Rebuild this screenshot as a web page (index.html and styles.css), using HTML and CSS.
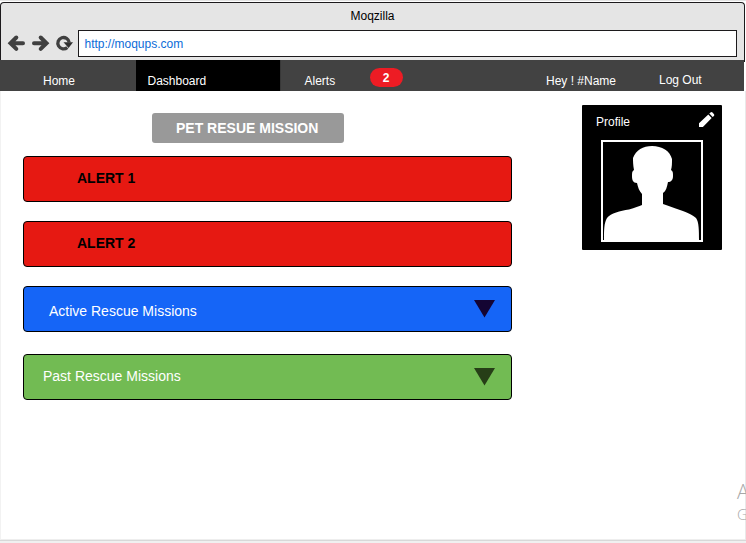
FILE: index.html
```html
<!DOCTYPE html>
<html lang="en">
<head>
<meta charset="utf-8">
<title>Moqzilla</title>
<link rel="stylesheet" href="styles.css">
</head>
<body>
<div class="window">
  <header class="chrome">
    <div class="title">Moqzilla</div>
    <div class="toolbar">
      <svg class="controls" width="70" height="19" viewBox="0 0 70 19" fill="none" stroke="#404040" stroke-width="4">
        <path d="M17 9.200H5M10.300 3.500L4.500 9.200L10.300 14.900" stroke-linecap="round"/>
        <path d="M28 9.200H40M34.700 3.500L40.500 9.200L34.700 14.900" stroke-linecap="round"/>
        <path d="M61.300 13.500A5.700 5.700 0 1 1 63.200 8.500" stroke-width="3.300"/>
        <path d="M57.500 8.300H67L62.600 14Z" fill="#303030" stroke="none"/>
      </svg>
      <div class="address">http://moqups.com</div>
    </div>
  </header>
  <nav class="nav">
    <a class="tab home">Home</a>
    <a class="tab dashboard">Dashboard</a>
    <a class="tab alerts">Alerts</a>
    <span class="badge">2</span>
    <span class="tab user">Hey ! #Name</span>
    <a class="tab logout">Log Out</a>
  </nav>
  <main class="page">
    <section class="missions">
      <h1 class="heading">PET RESUE MISSION</h1>
      <div class="card alert">ALERT 1</div>
      <div class="card alert">ALERT 2</div>
      <div class="card active"><span>Active Rescue Missions</span>
        <svg width="21" height="18" viewBox="0 0 21 18"><path d="M0 0H21L10.500 17.500Z" fill="#140533"/></svg></div>
      <div class="card past"><span>Past Rescue Missions</span>
        <svg width="21" height="18" viewBox="0 0 21 18"><path d="M0 0H21L10.500 17.500Z" fill="#263e17"/></svg></div>
    </section>
    <aside class="profile">
      <div class="profile-head"><span>Profile</span>
        <svg width="16" height="16" viewBox="0 0 16 16" fill="#fff"><path d="M0 11.200L9.300 2.500L12.700 5.900L3.900 15H0ZM10.300 1.600L11.500 .500Q12.500 -.300 13.500 .600L14.800 1.900Q15.700 2.900 14.900 3.900L13.700 5.100Z"/></svg>
      </div>
      <svg class="avatar" width="102" height="102" viewBox="0 0 102 102">
        <rect x="1" y="1" width="100" height="100" fill="#000" stroke="#fff" stroke-width="2"/>
        <path fill="#fff" d="M3 100C3 90 3 83 6 78C10 73 19 71 28 69.500C34 68 38 66 41 65V54C38 51 37 47 36 43C32 43 31 40 31 36C31 33 31 31 33 30C32 25 32 21 32 18C35 10 42 6 51 6C61 6 69 11 71 19C71 23 71 27 70 30C72 31 72 33 72 36C72 40 70 42 67 42C66 47 65 51 62 53V64C68 66 73 68 79 70C87 73 92 75 95 78C98 82 98 91 98 100Z"/>
      </svg>
    </aside>
  </main>
  <div class="watermark"><div class="wm-title">A</div><div class="wm-sub">G</div></div>
</div>
</body>
</html>
```

FILE: styles.css
```css
* { box-sizing: border-box; }
body {
  margin: 0;
  height: 543px;
  overflow: hidden;
  background: #f0f0f0;
  font: 12px/14px "Liberation Sans", Arial, sans-serif;
  color: #000;
}
.window {
  position: relative;
  display: flex;
  flex-direction: column;
  height: 541px;
  padding-top: 2px;
  background: linear-gradient(#e4e4e4, #e4e4e4) 0 0 / 100% 1px no-repeat, #fff;
  border-bottom: 1px solid #d8d8d8;
  overflow: hidden;
}
.chrome {
  width: 745px;
  height: 60px;
  margin-bottom: -2px;
  background: #e5e5e5;
  border: 1px solid #1c1a1c;
  border-bottom: 0;
  border-radius: 4px 4px 0 0;
}
.title { padding-top: 6px; text-align: center; }
.toolbar { display: flex; align-items: center; padding: 7px 7px 0 5px; }
.controls { flex: none; width: 70px; margin-right: 2px; }
.address {
  flex: 1;
  height: 27px;
  padding: 6px 5.500px;
  border: 1px solid #1c1a1c;
  background: #fff;
  color: #0b6cd8;
}
.nav {
  position: relative;
  display: flex;
  width: 744px;
  height: 31px;
  background: #424242;
  color: #fff;
}
.tab { padding-top: 14px; white-space: nowrap; }
.home { width: 136px; padding-left: 43px; }
.dashboard { width: 144px; padding-left: 11.500px; background: #000; }
.alerts { width: 89.500px; padding-left: 23.500px; border-left: 1px solid #383838; }
.badge {
  width: 33px;
  height: 19px;
  margin-top: 8px;
  border-radius: 10px;
  background: #ed1c24;
  font-weight: bold;
  line-height: 20px;
  text-align: center;
}
.user { margin-left: 143.500px; width: 113px; }
.logout { padding-top: 13px; }
.page {
  flex: 1;
  display: flex;
  justify-content: space-between;
  align-items: flex-start;
  width: 745px;
  padding: 14px 23px 0 22px;
  border-left: 1px solid #f2f2f2;
  border-bottom: 1px solid #eee;
  box-shadow: 1px 0 #e9e9e9;
}
.missions { width: 489px; padding-top: 8px; font-size: 14px; line-height: 16px; }
.heading {
  width: 192px;
  height: 30px;
  margin: 0 0 13px 129px;
  padding: 7px 0 0 24px;
  border-radius: 3px;
  background: #999;
  color: #fff;
  font-size: 14px;
  line-height: 16px;
  white-space: nowrap;
}
.card {
  display: flex;
  justify-content: space-between;
  align-items: flex-start;
  height: 46px;
  border: 1px solid #000;
  border-radius: 4px;
  color: #fff;
}
.alert {
  margin-bottom: 19px;
  padding: 13px 0 0 53px;
  background: #e61912;
  color: #000;
  font-weight: bold;
}
.active { margin-bottom: 22px; padding: 13px 16px 0 25px; background: #1565f7; }
.active span { padding-top: 3px; }
.past { padding: 13px 16px 0 19px; background: #72bb53; }
.profile {
  width: 140px;
  height: 145px;
  border-radius: 1px;
  background: #000;
  color: #fff;
}
.profile-head {
  display: flex;
  justify-content: space-between;
  height: 35px;
  padding: 7px 7px 0 14px;
}
.profile-head span { padding-top: 3px; }
.avatar { display: block; margin-left: 19px; }
/* Text that runs past the right edge of the window */
.watermark {
  position: absolute;
  left: 737px;
  top: 480px;
  color: #a8a8a8;
  font-family: "Open Sans", sans-serif;
}
.wm-title { font-size: 20px; line-height: 24px; font-weight: 300; }
.wm-sub { font-size: 15px; line-height: 20px; font-weight: 300; }
```
